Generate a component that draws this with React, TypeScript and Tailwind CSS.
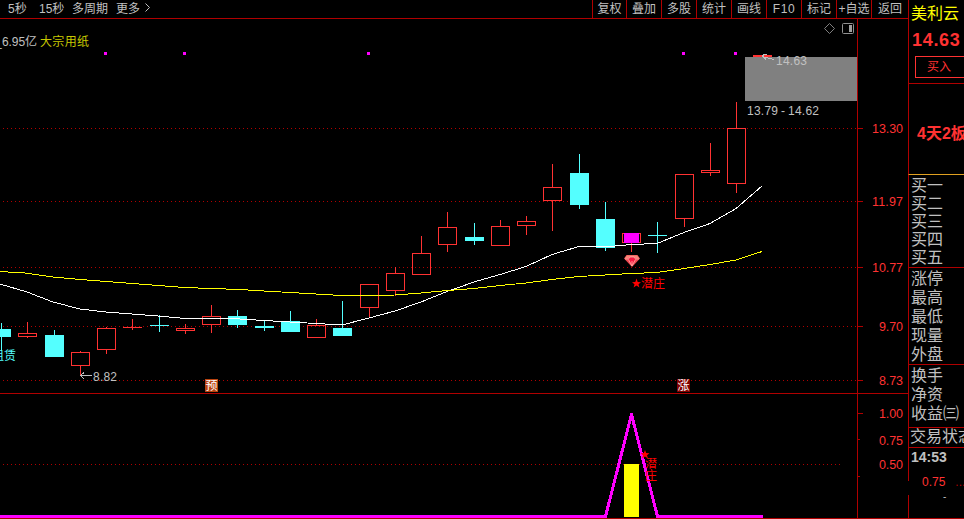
import React from "react";

type Candle = { x: number; top: number; bottom: number; high: number; low: number; up: boolean; flat?: boolean };

const UP = "#ff3232";
const DOWN = "#54ffff";
const LINE = "#b00000";
const TEXT = "#c0c0c0";

const c = (x: number, top: number, bottom: number, high: number, low: number, up: boolean, flat = false): Candle => ({
  x, top, bottom, high, low, up, flat,
});

// x is the left edge of the 19px wide body
const candles: Candle[] = [
  c(-8, 329, 337, 323, 351, false),
  c(18, 333, 337, 322, 338, true),
  c(45, 335, 357, 330, 357, false),
  c(71, 352, 366, 351, 375, true),
  c(97, 328, 350, 327, 354, true),
  c(123, 327, 328, 319, 330, true, true),
  c(150, 325, 326, 315, 332, false, true),
  c(176, 328, 331, 324, 334, true),
  c(202, 316, 325, 305, 333, true),
  c(228, 316, 325, 310, 328, false),
  c(255, 326, 328, 321, 331, false),
  c(281, 321, 332, 311, 332, false),
  c(307, 325, 338, 319, 338, true),
  c(333, 328, 336, 301, 336, false),
  c(360, 284, 308, 284, 318, true),
  c(386, 273, 291, 267, 296, true),
  c(412, 253, 275, 236, 275, true),
  c(438, 227, 245, 212, 252, true),
  c(465, 237, 241, 223, 245, false),
  c(491, 226, 246, 220, 246, true),
  c(517, 221, 226, 216, 235, true),
  c(543, 187, 201, 164, 231, true),
  c(570, 173, 205, 154, 209, false),
  c(596, 219, 248, 202, 251, false),
  c(622, 233, 243, 233, 252, true),
  c(648, 235, 236, 222, 253, false, true),
  c(675, 174, 219, 174, 227, true),
  c(701, 170, 173, 143, 176, true),
  c(727, 128, 184, 102, 193, true),
];

const shortAverage =
  "0,284 27,292 53,302 80,309 106,312 132,314 158,316 180,318 223,318 240,319 264,320.5 290,322 316,323.5 342,325 369,318 395,311 421,302 447,291.5 474,282 500,274.5 526,266.5 552,254.5 579,246.5 605,247 631,244.5 657,243.5 684,232.5 710,223.5 736,208.5 762,186";
const longAverage =
  "0,271.5 25,273 53,277 80,279.5 106,281.5 132,283.5 158,285.5 185,287.5 211,288.5 240,289.5 264,291 290,292.5 316,294 342,295.5 369,295.5 395,295 421,293 447,290.5 474,288.5 500,285.5 526,283 552,279.5 579,276.5 605,275 631,273.5 657,272.5 684,268.5 710,264.5 736,260 762,251.5";

const priceLabels = [
  { text: "13.30", y: 128, tick: 6 },
  { text: "11.97", y: 201, tick: 6 },
  { text: "10.77", y: 267, tick: 6 },
  { text: "9.70", y: 326, tick: 6 },
  { text: "8.73", y: 380, tick: 6 },
  { text: "1.00", y: 413, tick: 6 },
  { text: "0.75", y: 440, tick: 3 },
  { text: "0.50", y: 464, tick: 0 },
];

function CandleShape({ d }: { d: Candle }) {
  const color = d.up ? UP : DOWN;
  const h = d.bottom - d.top;
  const wickX = d.x + 9;
  if (d.flat) {
    return (
      <g fill={color}>
        <rect x={d.x} y={d.top} width={19} height={1} />
        <rect x={wickX} y={d.high} width={1} height={d.low - d.high} />
      </g>
    );
  }
  return (
    <g fill={color}>
      {d.high < d.top && <rect x={wickX} y={d.high} width={1} height={d.top - d.high} />}
      {d.low > d.bottom && <rect x={wickX} y={d.bottom} width={1} height={d.low - d.bottom} />}
      {d.up ? (
        <rect x={d.x + 0.5} y={d.top + 0.5} width={18} height={h - 1} fill="none" stroke={UP} />
      ) : (
        <rect x={d.x} y={d.top} width={19} height={h} />
      )}
    </g>
  );
}

// The drawing area starts right below the toolbar, so its own y axis begins at 19
function Chart() {
  return (
    <svg width={908} height={500} viewBox="0 19 908 500" className="block text-[12px]" shapeRendering="crispEdges">
      {[128, 201, 267, 326, 380, 464].map((y) => (
        <line key={y} x1={3} x2={y === 464 ? 842 : 857} y1={y + 0.5} y2={y + 0.5} stroke={LINE} strokeDasharray="1 3" />
      ))}
      <rect x={0} y={393} width={908} height={1} fill={LINE} />
      <rect x={0} y={518} width={908} height={1} fill={LINE} />
      <rect x={857} y={19} width={1} height={500} fill={LINE} />
      <rect x={857} y={476} width={3} height={1} fill={LINE} />
      {priceLabels.map((l) => (
        <g key={l.text}>
          <rect x={857} y={l.tick === 3 ? 439 : l.y} width={l.tick} height={1} fill={LINE} />
          <text x={903} y={l.y + 5} textAnchor="end" fill={UP} fontSize={12.5} textLength={l.text.length === 5 ? 31 : 24}>{l.text}</text>
        </g>
      ))}

      {[104, 183, 367, 682, 734].map((x) => (
        <rect key={x} x={x} y={52} width={3} height={3} fill="#ff00ff" />
      ))}

      <text x={-5} y={46} fill={TEXT}>_</text>
      <text x={2} y={46} fill={TEXT} textLength={35}>6.95亿</text>
      <text x={40} y={46} fill="#c8c800" textLength={49}>大宗用纸</text>

      <path d="M829.5 23.5 L834.5 28.5 L829.5 33.5 L824.5 28.5 Z" fill="none" stroke="#808080" shapeRendering="auto" />
      <rect x={842.5} y={23.5} width={11} height={10} rx={1} fill="none" stroke="#909090" shapeRendering="auto" />
      <rect x={849} y={25} width={3} height={7} fill="#a0a0a0" />

      {candles.map((d) => <CandleShape key={d.x} d={d} />)}
      <rect x={624} y={233} width={15} height={10} fill="#ff00ff" />
      <polyline points={shortAverage} fill="none" stroke="#ffffff" />
      <polyline points={longAverage} fill="none" stroke="#ffff00" />

      <rect x={745} y={57} width={112} height={44} fill="#808080" />
      <rect x={753} y={55} width={19} height={2} fill={UP} />
      <path d="M762.5 56.5 L774 59.5 M767 54.5 H763.5 L762.5 56.5 L766 59.5" fill="none" stroke={TEXT} />
      <text x={776} y={65} fill={TEXT} textLength={31}>14.63</text>
      <g fill={TEXT}>
        <text x={747} y={115} textLength={31}>13.79</text>
        <text x={781} y={115}>-</text>
        <text x={788} y={115} textLength={31}>14.62</text>
      </g>

      <text x={-8} y={360} fill={DOWN}>租赁</text>
      <path d="M80 375.5 H92 M84 372.5 L80.5 375.5 L84 379" fill="none" stroke={TEXT} />
      <text x={93} y={381} fill={TEXT} textLength={24}>8.82</text>

      <rect x={205} y={379} width={13} height={13} fill="#b8430f" />
      <text x={205.5} y={390} fill="#ffffff">预</text>
      <rect x={677} y={379} width={13} height={13} fill="#800000" />
      <text x={677.5} y={390} fill="#ffffff">涨</text>

      <g shapeRendering="auto">
        <path d="M626.5 255 H637.5 L640 258.5 L632 267 L624 258.5 Z" fill="#f04850" />
        <path d="M627 255.5 H637 L639.5 258.5 H624.5 Z" fill="#f88878" />
        <path d="M628 258.5 L630 257 H634 L636 258.5 L632 266 Z" fill="#f81840" />
        <path d="M625 259 H628.5 L630 257 H634 L635.5 259 H639 M628.5 259.5 L632 266 L635.5 259.5" fill="none" stroke="#ffb0a8" strokeWidth={0.8} />
        <path d="M632 261 V266" stroke="#ffb0a8" strokeWidth={0.8} />
        <path d="M636.5 278.5 L637.7 282 L641 282.2 L638.5 284.2 L639.4 287.5 L636.5 285.6 L633.6 287.5 L634.5 284.2 L632 282.2 L635.3 282 Z" fill="#ff0000" />
      </g>
      <text x={641} y={288} fill="#ff0000">潜庄</text>

      <rect x={624} y={464} width={15} height={53} fill="#ffff00" />
      <path d="M0 516.5 H605.5 L631.5 414.5 L657.5 516.5 H763" fill="none" stroke="#ff00ff" strokeWidth={3} strokeLinejoin="round" />
      <path d="M645 450 L646.2 453 L649.5 453.2 L647 455.2 L648 458.5 L645 456.6 L642 458.5 L643 455.2 L640.5 453.2 L643.8 453 Z" fill="#ff0000" shapeRendering="auto" />
      <foreignObject x={645} y={458} width={13} height={24}>
        <div className="w-3 text-[12px] leading-[12px] break-all text-[#ff0000]">潜庄</div>
      </foreignObject>
    </svg>
  );
}

const periods = [
  { label: "5秒", box: "w-[31px]" },
  { label: "15秒", box: "w-[33px]" },
  { label: "多周期", box: "w-[44px]" },
  { label: "更多", box: "w-[29px]" },
];

const actions = [
  { label: "复权", box: "w-[34px]" },
  { label: "叠加", box: "w-[35px]" },
  { label: "多股", box: "w-[35px]" },
  { label: "统计", box: "w-[35px]" },
  { label: "画线", box: "w-[35px]" },
  { label: "F10", box: "w-[35px] tracking-[0.6px]" },
  { label: "标记", box: "w-[35px]" },
  { label: "+自选", box: "w-[35px]" },
  { label: "返回", box: "w-[37px]" },
];

function Toolbar() {
  return (
    <div className="flex h-[19px] items-stretch justify-between border-b border-[#b00000] text-[12px] leading-[18px] text-[#c0c0c0]">
      <div className="flex pl-2">
        {periods.map((p) => <span key={p.label} className={`shrink-0 whitespace-nowrap ${p.box}`}>{p.label}</span>)}
        <svg width="6" height="9" viewBox="0 0 6 9" className="mt-[3px]">
          <path d="M0.5 0.5 L4.5 4.5 L0.5 8.5" fill="none" stroke="#c0c0c0" />
        </svg>
      </div>
      <div className="flex">
        {actions.map((a) => (
          <span key={a.label} className={`shrink-0 whitespace-nowrap border-l border-[#b00000] text-center ${a.box}`}>{a.label}</span>
        ))}
      </div>
    </div>
  );
}

function Sidebar() {
  return (
    <aside className="flex w-14 shrink-0 flex-col overflow-hidden whitespace-nowrap text-[16px] text-[#c0c0c0]">
      <div className="h-[84px] border-b border-l border-[#b00000]">
        <div className="h-[27px] pl-0.5 leading-[27px] text-[#ffff00]">美利云</div>
        <div className="h-[29px] pl-[3px] text-[18px] leading-[26px] font-bold tracking-[0.7px] text-[#ff3232]">14.63</div>
        <div className="ml-1.5 h-[22px] w-[60px] border border-[#ff3232] pl-[11px] text-[12px] leading-[20px] text-[#ff3232]">买入</div>
      </div>
      <div className="h-[91px] border-b border-l border-b-[#e0a020] border-l-[#b00000] pl-2 leading-[99px] font-bold text-[#ff3232]">4天2板</div>
      <div className="h-[93px] border-b border-l border-[#b00000] pt-0.5 pl-0.5 leading-[18px]">
        {["买一", "买二", "买三", "买四", "买五"].map((t) => <div key={t}>{t}</div>)}
      </div>
      <div className="h-[97px] border-b border-l border-[#b00000] pt-px pl-0.5 leading-[19px]">
        {["涨停", "最高", "最低", "现量", "外盘"].map((t) => <div key={t}>{t}</div>)}
      </div>
      <div className="h-[63px] border-b border-l border-[#b00000] pt-px pl-0.5 leading-[19px]">
        {["换手", "净资", "收益㈢"].map((t) => <div key={t}>{t}</div>)}
      </div>
      <div className="h-5 border-b border-l border-[#b00000] pl-px leading-[18px]">交易状态</div>
      <div className="h-[33px] border-l border-[#b00000] pl-0.5 text-[14px] leading-[19px] font-bold">14:53</div>
      <div className="h-[14px] pl-[14px] text-[12px] leading-[2px] text-[#ff3232]">0.75<span className="pl-2.5 text-[#b00000]">...</span></div>
      <div className="h-6 border-b border-l border-[#b00000] pl-[34px] text-[10px] leading-[3px]">-</div>
    </aside>
  );
}

export default function App() {
  return (
    <div className="flex h-[519px] w-[964px] overflow-hidden bg-black font-['Liberation_Sans','Noto_Sans_CJK_SC',sans-serif]">
      <main className="w-[908px] shrink-0">
        <Toolbar />
        <Chart />
      </main>
      <Sidebar />
    </div>
  );
}
